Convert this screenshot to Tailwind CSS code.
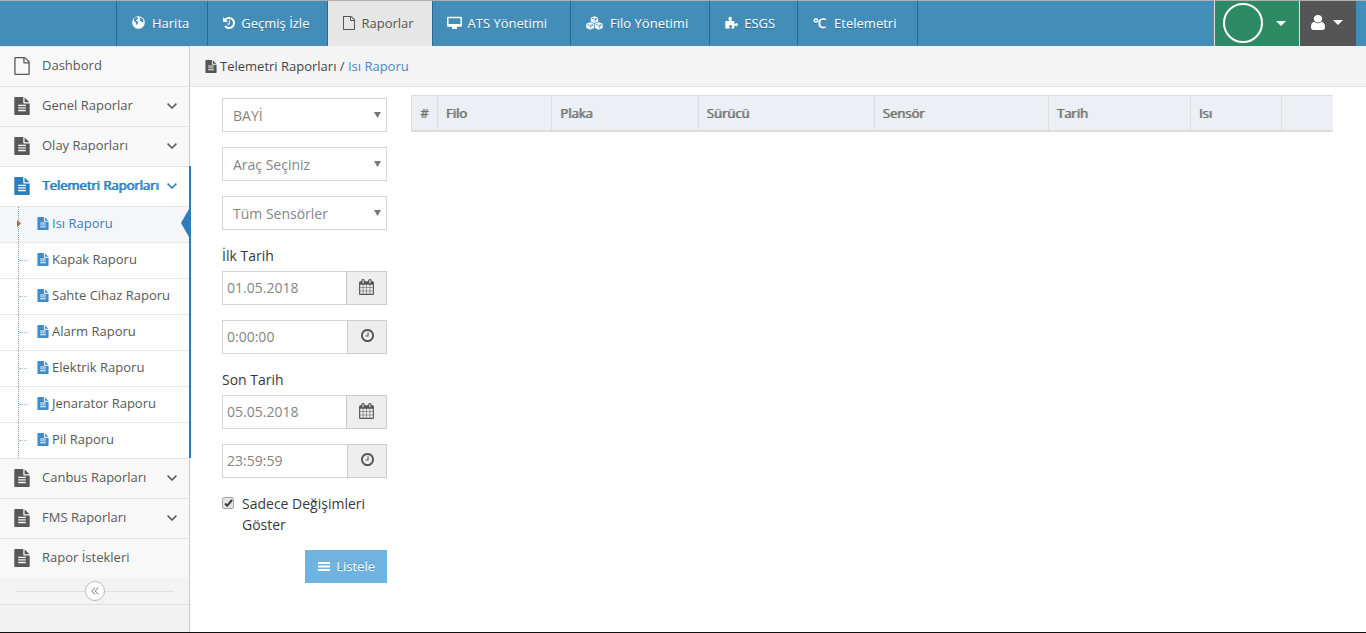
<!DOCTYPE html>
<html lang="tr">
<head>
<meta charset="utf-8">
<meta name="viewport" content="width=device-width, initial-scale=1">
<title>Isı Raporu</title>
<script src="https://cdn.jsdelivr.net/npm/@tailwindcss/browser@4"></script>
</head>
<body class="flex min-h-screen flex-col border-t border-b border-t-[#b0b0b0] border-b-[#111] bg-white font-['Open_Sans',sans-serif] text-[13px] leading-5 text-[#393939]">
<svg class="hidden">
  <symbol id="file" viewBox="128 0 1536 1792"><path d="M1596 476q14 14 28 36h-472v-472q22 14 36 28zm-476 164h544v1056q0 40-28 68t-68 28h-1344q-40 0-68-28t-28-68v-1600q0-40 28-68t68-28h800v544q0 40 28 68t68 28zm160 736v-64q0-14-9-23t-23-9h-704q-14 0-23 9t-9 23v64q0 14 9 23t23 9h704q14 0 23-9t9-23zm0-256v-64q0-14-9-23t-23-9h-704q-14 0-23 9t-9 23v64q0 14 9 23t23 9h704q14 0 23-9t9-23zm0-256v-64q0-14-9-23t-23-9h-704q-14 0-23 9t-9 23v64q0 14 9 23t23 9h704q14 0 23-9t9-23z"/></symbol>
  <symbol id="file-o" viewBox="128 0 1536 1792"><path d="M1596 380q28 28 48 76t20 88v1152q0 40-28 68t-68 28h-1344q-40 0-68-28t-28-68v-1600q0-40 28-68t68-28h896q40 0 88 20t76 48zm-444-244v376h376q-10-29-22-41l-313-313q-12-12-41-22zm384 1528v-1024h-416q-40 0-68-28t-28-68v-416h-768v1536h1280z"/></symbol>
  <symbol id="calendar" viewBox="64 0 1664 1792"><path d="M192 1664h288v-288h-288v288zm352 0h320v-288h-320v288zm-352-352h288v-320h-288v320zm352 0h320v-320h-320v320zm-352-384h288v-288h-288v288zm736 736h320v-288h-320v288zm-384-736h320v-288h-320v288zm768 736h288v-288h-288v288zm-384-352h320v-320h-320v320zm-352-864v-288q0-13-9.500-22.500t-22.500-9.500h-64q-13 0-22.500 9.500t-9.500 22.500v288q0 13 9.500 22.500t22.500 9.500h64q13 0 22.500-9.500t9.500-22.500zm736 864h288v-320h-288v320zm-384-384h320v-288h-320v288zm384 0h288v-288h-288v288zm32-480v-288q0-13-9.500-22.500t-22.500-9.500h-64q-13 0-22.500 9.500t-9.500 22.500v288q0 13 9.500 22.500t22.500 9.500h64q13 0 22.500-9.500t9.500-22.500zm384-64v1280q0 52-38 90t-90 38h-1408q-52 0-90-38t-38-90v-1280q0-52 38-90t90-38h128v-96q0-66 47-113t113-47h64q66 0 113 47t47 113v96h384v-96q0-66 47-113t113-47h64q66 0 113 47t47 113v96h128q52 0 90 38t38 90z"/></symbol>
  <symbol id="clock" viewBox="128 128 1536 1536"><path d="M1024 544v448q0 14-9 23t-23 9h-320q-14 0-23-9t-9-23v-64q0-14 9-23t23-9h224v-352q0-14 9-23t23-9h64q14 0 23 9t9 23zm416 352q0-148-73-273t-198-198-273-73-273 73-198 198-73 273 73 273 198 198 273 73 273-73 198-198 73-273zm224 0q0 209-103 385.500t-279.500 279.500-385.500 103-385.500-103-279.500-279.500-103-385.500 103-385.500 279.500-279.500 385.500-103 385.500 103 279.500 279.500 103 385.500z"/></symbol>
  <symbol id="angle" viewBox="0 0 10 6"><path d="M.6.600l4.400 4.400 4.400-4.400" fill="none" stroke="currentColor" stroke-width="1.500"/></symbol>
  <symbol id="caret" viewBox="0 0 10 5"><path d="M0 0h10L5 5z"/></symbol>
</svg>

<header class="flex h-[45px] bg-[#438eb9] text-white">
  <nav class="ml-[116px] flex [text-shadow:0_1px_0_rgba(0,0,0,.25)] [&>a]:pb-[2px]">
    <a href="#" class="flex items-center gap-[7px] border-l border-[#2c6a8e] pl-[15px] pr-[18px]">
      <svg class="size-[13px]" viewBox="0 0 13 13"><circle cx="6.500" cy="6.500" r="6.300" fill="#fff"/><path fill="#438eb9" d="M2.200 2.600 4 1.300l1.800.2.500 1.100-1.500.8-.6 1.300 1.300.6.800 1.200-.7 1.300-.3 1.800L4.100 8 3.600 6.300 1.900 5.100zM7.300 1.300l2.400.6 1.500 1.900.3 2.100-1.400.3-1-1.200-1.400-.3.500-1.400z"/></svg>Harita</a>
    <a href="#" class="flex items-center gap-[6px] border-l border-[#2c6a8e] pl-[15px] pr-[18px]">
      <svg class="size-[12px]" fill="currentColor" viewBox="128 128 1536 1536"><path d="M1664 896q0 156-61 298t-164 245-245 164-298 61q-172 0-327-72.500t-264-204.500q-7-10-6.500-22.500t8.500-20.500l137-138q10-9 25-9 16 2 23 12 73 95 179 147t225 52q104 0 198.500-40.500t163.500-109.500 109.500-163.500 40.500-198.500-40.500-198.500-109.500-163.500-163.500-109.500-198.500-40.500q-98 0-188 35.500t-160 101.500l137 138q31 30 14 69-17 40-59 40h-448q-26 0-45-19t-19-45v-448q0-42 40-59 39-17 69 14l130 129q107-101 244.500-156.500t284.500-55.500q156 0 298 61t245 164 164 245 61 298zm-640-288v448q0 14-9 23t-23 9h-320q-14 0-23-9t-9-23v-64q0-14 9-23t23-9h224v-352q0-14 9-23t23-9h64q14 0 23 9t9 23z"/></svg>Geçmiş İzle</a>
    <a href="#" aria-current="page" class="flex items-center gap-[6px] border-l border-[#2c6a8e] bg-[#e6e6e6] pl-[15px] pr-[18px] text-[#555] [text-shadow:none]">
      <svg class="h-[14px] w-[12px]" fill="currentColor"><use href="#file-o"/></svg>Raporlar</a>
    <a href="#" class="flex items-center gap-[6px] border-l border-[#2c6a8e] pl-[14px] pr-[23px]">
      <svg class="h-[14px] w-[15px]" viewBox="0 0 15 14"><path fill="#fff" fill-rule="evenodd" d="M1.200.8h12.600q1.200 0 1.200 1.200v7.500q0 1.200-1.200 1.200H9.500l.6 1.600v.7H4.900v-.7l.6-1.600H1.200Q0 10.700 0 9.500V2Q0 .8 1.200.8zM1.500 2.200v5.900h12V2.200z"/></svg>ATS Yönetimi</a>
    <a href="#" class="flex items-center gap-[7px] border-l border-[#2c6a8e] pl-[15px] pr-[21px]">
      <svg class="h-[14px] w-[17px]" viewBox="0 0 17 14"><g fill="#fff"><path d="M8.500.2l3.700 1.500v3.700L8.500 7.200 4.800 5.400V1.700z"/><path d="M4.200 6.300l3.900 1.500v4.100l-3.900 1.900L.3 11.900V7.800zM12.800 6.300l3.900 1.500v4.100l-3.900 1.900-3.900-1.900V7.800z"/></g><path fill="none" stroke="#438eb9" stroke-width=".8" d="M5.800 2.200l2.700 1 2.700-1M9 6.200V4l2.300-.9M1.400 8.400l2.800 1.100L7 8.400M4.700 12.600v-2.300l2.400-1M10 8.400l2.800 1.100 2.800-1.100M13.300 12.600v-2.300l2.400-1"/></svg>Filo Yönetimi</a>
    <a href="#" class="flex items-center gap-[6px] border-l border-[#2c6a8e] pl-[15px] pr-[22px]">
      <svg class="size-[13px]" viewBox="0 0 13 13"><path fill="#fff" d="M.3 5h3.500l.5-.5Q3.200 3.400 3.400 2.200 3.800.8 5.200.8t1.700 1.400q.1 1.200-.9 2.300l.4.500h2.900v2.700l.5.200q1.200-1.100 2.300-.6.900.5.800 1.500-.1 1.300-1.300 1.500-.8.100-1.800-.8l-.5.200v2.700H6.400v-.8q.9-.8.600-1.700-.4-.9-1.500-.9T4.100 9.900q-.2.900.6 1.700v.8H.3z"/></svg>ESGS</a>
    <a href="#" class="flex items-center gap-2 border-x border-[#2c6a8e] pl-[15px] pr-[21px]"><span class="font-bold">℃</span>Etelemetri</a>
  </nav>
  <div class="ml-auto mr-[10px] flex">
    <button type="button" aria-label="Firma" class="flex w-[85px] items-center gap-[13px] border-l border-[#e1e1e1] bg-[#2e8965] pb-[1px] pl-2">
      <span class="size-[40px] rounded-full border-2 border-white"></span>
      <svg class="h-[5px] w-[10px]" fill="currentColor"><use href="#caret"/></svg>
    </button>
    <button type="button" aria-label="Kullanıcı" class="flex w-[57px] items-center gap-2 border-l border-[#e1e1e1] bg-[#555] pb-[2px] pl-[11px]">
      <svg class="h-[15px] w-[14px]" fill="currentColor" viewBox="256 128 1280 1536" preserveAspectRatio="none"><path d="M1536 1399q0 109-62.500 187t-150.500 78h-854q-88 0-150.500-78t-62.500-187q0-85 8.500-160.500t31.500-152 58.500-131 94-89 134.500-34.500q131 128 313 128t313-128q76 0 134.500 34.500t94 89 58.500 131 31.500 152 8.500 160.500zm-256-887q0 159-112.500 271.500t-271.500 112.500-271.500-112.500-112.500-271.500 112.500-271.500 271.500-112.500 271.500 112.500 112.500 271.500z"/></svg>
      <svg class="h-[5px] w-[10px]" fill="currentColor"><use href="#caret"/></svg>
    </button>
  </div>
</header>

<div class="flex flex-1">
  <aside class="flex w-[190px] shrink-0 flex-col border-r border-[#ccc] bg-[#f2f2f2] text-[#585858]">
    <nav class="[&_a]:pb-1 [&_a>svg]:mt-[2px]">
      <a href="#" class="flex h-10 items-center border-t border-[#e5e5e5] bg-[#f8f8f8] pl-[14px]"><svg class="mr-3 h-[18px] w-4" fill="currentColor"><use href="#file-o"/></svg>Dashbord</a>
      <a href="#" class="flex h-10 items-center border-t border-[#e5e5e5] bg-[#f8f8f8] pl-[14px] pr-[12px]"><svg class="mr-3 h-[18px] w-4" fill="currentColor"><use href="#file"/></svg>Genel Raporlar<svg class="ml-auto h-[6px] w-[10px]"><use href="#angle"/></svg></a>
      <a href="#" class="flex h-10 items-center border-t border-[#e5e5e5] bg-[#f8f8f8] pl-[14px] pr-[12px]"><svg class="mr-3 h-[18px] w-4" fill="currentColor"><use href="#file"/></svg>Olay Raporları<svg class="ml-auto h-[6px] w-[10px]"><use href="#angle"/></svg></a>
      <div class="relative -mr-[2px] border-r-2 border-[#2b7dbc] bg-white">
        <a href="#" class="flex h-10 items-center border-t border-[#e5e5e5] pl-[14px] pr-[12px] whitespace-nowrap text-[#2b7dbc] [text-shadow:1px_0_0_#2b7dbc]"><svg class="mr-3 h-[18px] w-4 shrink-0" fill="currentColor"><use href="#file"/></svg>Telemetri Raporları<svg class="ml-auto h-[6px] w-[10px] shrink-0"><use href="#angle"/></svg></a>
        <ul class="relative">
          <li class="border-t border-[#e5e5e5]"><a href="#" class="flex h-[35px] items-center gap-[3px] bg-[#f4f6fa] pl-[37px] text-[#3b7cb5]"><svg class="h-[13px] w-[12px]" fill="#428bca"><use href="#file"/></svg>Isı Raporu</a></li>
          <li class="relative border-t border-dotted border-[#d4d4d4]"><span class="absolute top-[17px] left-[19px] w-2 border-t border-dotted border-[#9dbdd6]"></span><a href="#" class="flex h-[35px] items-center gap-[3px] pl-[37px]"><svg class="h-[13px] w-[12px]" fill="#428bca"><use href="#file"/></svg>Kapak Raporu</a></li>
          <li class="relative border-t border-dotted border-[#d4d4d4]"><span class="absolute top-[17px] left-[19px] w-2 border-t border-dotted border-[#9dbdd6]"></span><a href="#" class="flex h-[35px] items-center gap-[3px] pl-[37px]"><svg class="h-[13px] w-[12px]" fill="#428bca"><use href="#file"/></svg>Sahte Cihaz Raporu</a></li>
          <li class="relative border-t border-dotted border-[#d4d4d4]"><span class="absolute top-[17px] left-[19px] w-2 border-t border-dotted border-[#9dbdd6]"></span><a href="#" class="flex h-[35px] items-center gap-[3px] pl-[37px]"><svg class="h-[13px] w-[12px]" fill="#428bca"><use href="#file"/></svg>Alarm Raporu</a></li>
          <li class="relative border-t border-dotted border-[#d4d4d4]"><span class="absolute top-[17px] left-[19px] w-2 border-t border-dotted border-[#9dbdd6]"></span><a href="#" class="flex h-[35px] items-center gap-[3px] pl-[37px]"><svg class="h-[13px] w-[12px]" fill="#428bca"><use href="#file"/></svg>Elektrik Raporu</a></li>
          <li class="relative border-t border-dotted border-[#d4d4d4]"><span class="absolute top-[17px] left-[19px] w-2 border-t border-dotted border-[#9dbdd6]"></span><a href="#" class="flex h-[35px] items-center gap-[3px] pl-[37px]"><svg class="h-[13px] w-[12px]" fill="#428bca"><use href="#file"/></svg>Jenarator Raporu</a></li>
          <li class="relative border-t border-dotted border-[#d4d4d4]"><span class="absolute top-[17px] left-[19px] w-2 border-t border-dotted border-[#9dbdd6]"></span><a href="#" class="flex h-[35px] items-center gap-[3px] pl-[37px]"><svg class="h-[13px] w-[12px]" fill="#428bca"><use href="#file"/></svg>Pil Raporu</a></li>
          <li aria-hidden="true" class="pointer-events-none absolute top-px bottom-0 left-[18px] border-l border-dotted border-[#7aa3c4]"></li>
          <li aria-hidden="true" class="absolute top-[14px] left-[17px]"><svg class="h-[7px] w-1" viewBox="0 0 4 7"><path fill="#c86139" d="M0 0l4 3.500L0 7z"/></svg></li>
          <li aria-hidden="true" class="absolute top-[3px] right-0"><svg class="h-[28px] w-2" viewBox="0 0 8 28"><path fill="#2b7dbc" d="M8 0v28L0 14z"/></svg></li>
        </ul>
      </div>
      <a href="#" class="flex h-10 items-center border-t border-[#e5e5e5] bg-[#f8f8f8] pl-[14px] pr-[12px]"><svg class="mr-3 h-[18px] w-4" fill="currentColor"><use href="#file"/></svg>Canbus Raporları<svg class="ml-auto h-[6px] w-[10px]"><use href="#angle"/></svg></a>
      <a href="#" class="flex h-10 items-center border-t border-[#e5e5e5] bg-[#f8f8f8] pl-[14px] pr-[12px]"><svg class="mr-3 h-[18px] w-4" fill="currentColor"><use href="#file"/></svg>FMS Raporları<svg class="ml-auto h-[6px] w-[10px]"><use href="#angle"/></svg></a>
      <a href="#" class="flex h-10 items-center border-t border-[#e5e5e5] bg-[#f8f8f8] pl-[14px]"><svg class="mr-3 h-[18px] w-4" fill="currentColor"><use href="#file"/></svg>Rapor İstekleri</a>
    </nav>
    <div class="flex h-[27px] items-center border-b border-[#e0e0e0] bg-[#f3f3f3] px-[15px]">
      <span class="h-px flex-1 bg-[#e0e0e0]"></span>
      <button type="button" aria-label="Menüyü daralt" class="grid size-5 place-items-center rounded-full border border-[#bbb] bg-white"><svg class="size-[8px]" viewBox="0 0 9 9" fill="none" stroke="#999" stroke-width="1.200"><path d="M4.500.7L.9 4.500l3.600 3.800M8.300.7L4.700 4.500l3.600 3.800"/></svg></button>
      <span class="h-px flex-1 bg-[#e0e0e0]"></span>
    </div>
  </aside>

  <main class="min-w-0 flex-1">
    <div class="flex h-[41px] items-center border-b border-[#e5e5e5] bg-[#f4f4f4] pl-[15px] text-[#444]">
      <svg class="mr-[3px] h-[13px] w-[12px]" fill="#555"><use href="#file"/></svg>Telemetri Raporları&nbsp;/&nbsp;<a href="#" class="text-[#428bca]">Isı Raporu</a>
    </div>
    <div class="flex items-start gap-6 pt-2 pr-[33px] pl-8">
      <form class="mt-[3px] w-[165px] shrink-0 text-sm leading-[21px]">
        <div class="mb-[15px] grid items-center">
          <select aria-label="Bayi" class="col-start-1 row-start-1 h-[34px] w-full appearance-none border border-[#d5d5d5] bg-white px-[10px] text-[#858585]"><option>BAYİ</option></select>
          <svg class="pointer-events-none col-start-1 row-start-1 mr-[6px] h-[6px] w-[7px] justify-self-end" viewBox="0 0 7 6"><path fill="#777" d="M0 0h7L3.500 6z"/></svg>
        </div>
        <div class="mb-[15px] grid items-center">
          <select aria-label="Araç" class="col-start-1 row-start-1 h-[34px] w-full appearance-none border border-[#d5d5d5] bg-white px-[10px] text-[#858585]"><option>Araç Seçiniz</option></select>
          <svg class="pointer-events-none col-start-1 row-start-1 mr-[6px] h-[6px] w-[7px] justify-self-end" viewBox="0 0 7 6"><path fill="#777" d="M0 0h7L3.500 6z"/></svg>
        </div>
        <div class="mb-[15px] grid items-center">
          <select aria-label="Sensör" class="col-start-1 row-start-1 h-[34px] w-full appearance-none border border-[#d5d5d5] bg-white px-[10px] text-[#858585]"><option>Tüm Sensörler</option></select>
          <svg class="pointer-events-none col-start-1 row-start-1 mr-[6px] h-[6px] w-[7px] justify-self-end" viewBox="0 0 7 6"><path fill="#777" d="M0 0h7L3.500 6z"/></svg>
        </div>
        <label for="d1" class="mb-[5px] block">İlk Tarih</label>
        <div class="mb-[15px] flex h-[34px]">
          <input id="d1" type="text" value="01.05.2018" class="min-w-0 flex-1 border border-r-0 border-[#d5d5d5] px-1 pb-[2px] text-[#858585]">
          <button type="button" aria-label="Takvim" class="grid w-[41px] place-items-center border border-[#ccc] bg-[#eee] pb-[2px] text-[#555]"><svg class="h-[16px] w-[15px]" fill="currentColor"><use href="#calendar"/></svg></button>
        </div>
        <div class="mb-[15px] flex h-[34px]">
          <input aria-label="İlk saat" type="text" value="0:00:00" class="min-w-0 flex-1 border border-r-0 border-[#d5d5d5] px-1 pb-[2px] text-[#858585]">
          <button type="button" aria-label="Saat" class="grid w-10 place-items-center border border-[#ccc] bg-[#eee] pb-[3px] text-[#555]"><svg class="size-[13px]" fill="currentColor"><use href="#clock"/></svg></button>
        </div>
        <label for="d2" class="mb-[5px] block">Son Tarih</label>
        <div class="mb-[15px] flex h-[34px]">
          <input id="d2" type="text" value="05.05.2018" class="min-w-0 flex-1 border border-r-0 border-[#d5d5d5] px-1 pb-[2px] text-[#858585]">
          <button type="button" aria-label="Takvim" class="grid w-[41px] place-items-center border border-[#ccc] bg-[#eee] pb-[2px] text-[#555]"><svg class="h-[16px] w-[15px]" fill="currentColor"><use href="#calendar"/></svg></button>
        </div>
        <div class="mb-[15px] flex h-[34px]">
          <input aria-label="Son saat" type="text" value="23:59:59" class="min-w-0 flex-1 border border-r-0 border-[#d5d5d5] px-1 pb-[2px] text-[#858585]">
          <button type="button" aria-label="Saat" class="grid w-10 place-items-center border border-[#ccc] bg-[#eee] pb-[3px] text-[#555]"><svg class="size-[13px]" fill="currentColor"><use href="#clock"/></svg></button>
        </div>
        <label class="mb-[15px] flex items-start gap-2">
          <span class="mt-1 grid shrink-0 place-items-center">
            <input type="checkbox" checked class="peer col-start-1 row-start-1 size-3 appearance-none rounded-[2px] border border-[#a5a5a5] bg-[#e4e4e4]">
            <svg class="pointer-events-none invisible col-start-1 row-start-1 h-2 w-[9px] peer-checked:visible" viewBox="0 0 9 8"><path d="M1 4.500L3.200 6.700 8 1" fill="none" stroke="#3c3c3c" stroke-width="2"/></svg>
          </span>
          Sadece Değişimleri Göster</label>
        <button type="submit" class="ml-auto flex h-[33px] items-center gap-[6px] bg-[#6fb3e0] pr-3 pl-[13px] text-[13px] text-white [text-shadow:0_-1px_0_rgba(0,0,0,.25)]"><svg class="h-[9px] w-[12px]" viewBox="0 0 12 9"><path fill="#fff" d="M0 0h12v2H0zM0 3.500h12v2H0zM0 7h12v2H0z"/></svg>Listele</button>
      </form>
      <table class="w-full table-fixed border-collapse border-l border-[#ddd] text-left text-[#707070]">
        <colgroup><col class="w-[2.8%]"><col class="w-[12.4%]"><col class="w-[15.9%]"><col class="w-[19.1%]"><col class="w-[18.9%]"><col class="w-[15.4%]"><col class="w-[9.9%]"><col class="w-[5.6%]"></colgroup>
        <thead>
          <tr class="h-[35px] border-t border-b-2 border-[#ddd] bg-[#ecf0f5] [&>th]:border-r [&>th]:border-[#ddd] [&>th]:px-2 [&>th]:font-normal [&>th]:[text-shadow:1px_0_0_#8a8a8a] [&>th:last-child]:border-r-0">
            <th scope="col">#</th><th scope="col">Filo</th><th scope="col">Plaka</th><th scope="col">Sürücü</th><th scope="col">Sensör</th><th scope="col">Tarih</th><th scope="col">Isı</th><th scope="col"></th>
          </tr>
        </thead>
      </table>
    </div>
  </main>
</div>
</body>
</html>
